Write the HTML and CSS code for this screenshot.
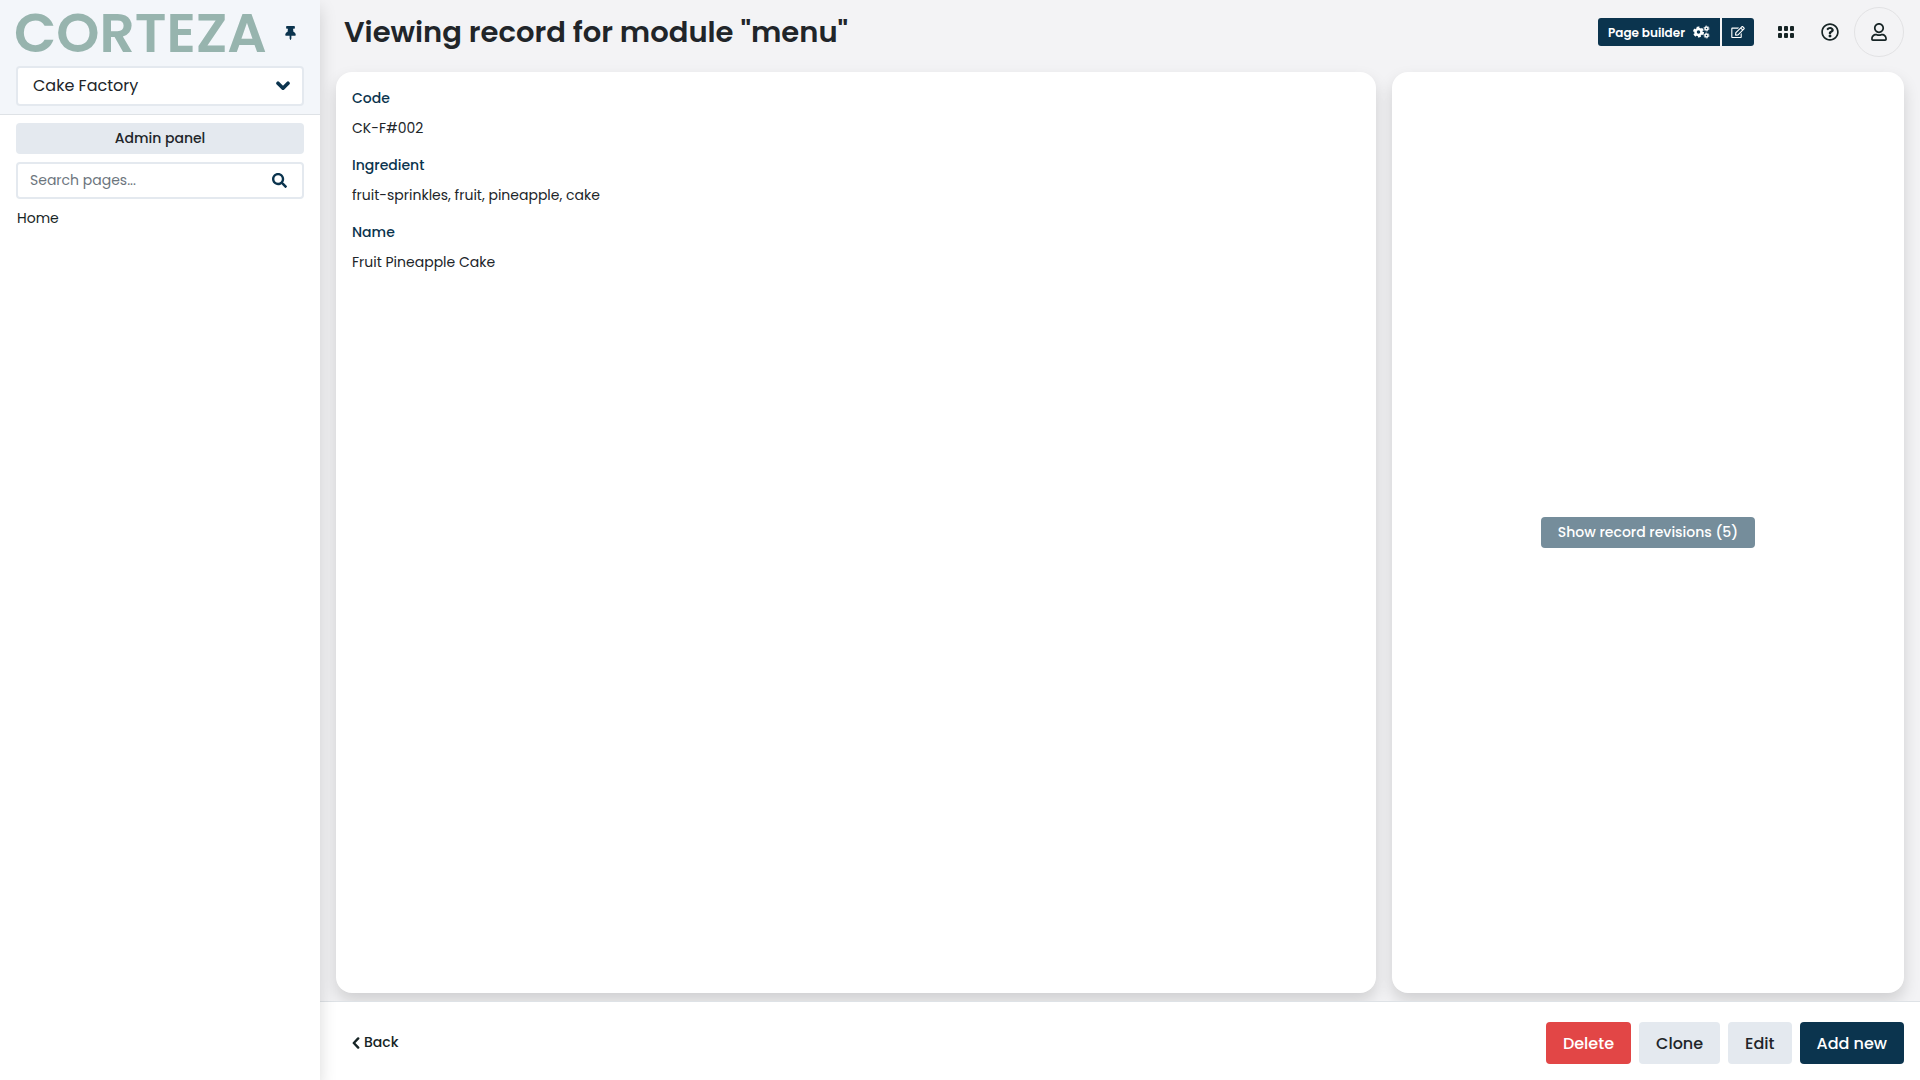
FILE: index.html
```html
<!DOCTYPE html>
<html lang="en">
<head>
<meta charset="utf-8">
<meta name="viewport" content="width=device-width, initial-scale=1">
<title>Viewing record for module "menu"</title>
<link rel="stylesheet" href="styles.css">
</head>
<body>
<div class="app">
  <aside class="sidebar">
    <header class="sidebar-head">
      <div class="brand">
        <span class="logo">CORTEZA</span>
        <button class="pin" type="button" aria-label="Pin sidebar">
          <svg width="11" height="14" viewBox="0 0 384 512" fill="currentColor"><path d="M298.028 214.267L285.793 96H328c13.255 0 24-10.745 24-24V24c0-13.255-10.745-24-24-24H56C42.745 0 32 10.745 32 24v48c0 13.255 10.745 24 24 24h42.207L85.972 214.267C37.465 236.82 0 277.261 0 328c0 13.255 10.745 24 24 24h136v104.007c0 1.242.289 2.467.845 3.578l24 48c2.941 5.882 11.364 5.893 14.311 0l24-48a8.008 8.008 0 0 0 .845-3.578V352h136c13.255 0 24-10.745 24-24-.001-51.183-37.983-91.42-85.973-113.733z"/></svg>
        </button>
      </div>
      <div class="field">
        <select class="namespace" aria-label="Namespace">
          <option>Cake Factory</option>
        </select>
        <svg class="field-icon" width="14" height="10" viewBox="0 0 14 10" fill="none" stroke="currentColor" stroke-width="3.6" stroke-linecap="round" stroke-linejoin="round"><path d="M2 2.2l5 5 5-5"/></svg>
      </div>
    </header>
    <nav class="sidebar-body">
      <button class="btn btn-light btn-small" type="button">Admin panel</button>
      <div class="field">
        <input class="search" type="search" placeholder="Search pages..." aria-label="Search pages">
        <svg class="field-icon search-icon" width="15" height="15" viewBox="0 0 512 512" fill="currentColor"><path d="M505 442.7L405.3 343c-4.5-4.5-10.6-7-17-7H372c27.6-35.3 44-79.7 44-128C416 93.1 322.9 0 208 0S0 93.1 0 208s93.1 208 208 208c48.3 0 92.7-16.4 128-44v16.3c0 6.4 2.5 12.5 7 17l99.7 99.7c9.4 9.4 24.6 9.4 33.9 0l28.3-28.3c9.4-9.4 9.4-24.6.1-34zM208 336c-70.7 0-128-57.2-128-128 0-70.7 57.2-128 128-128 70.7 0 128 57.2 128 128 0 70.7-57.2 128-128 128z"/></svg>
      </div>
      <a class="page-link" href="#">Home</a>
    </nav>
  </aside>

  <div class="content">
    <header class="topbar">
      <h1 class="title">Viewing record for module "menu"</h1>
      <div class="builder">
        <button class="builder-main" type="button">Page builder
          <svg width="17" height="14" viewBox="0 0 34 28" fill="none" stroke="currentColor">
            <circle cx="11" cy="14" r="6" stroke-width="5"/>
            <circle cx="11" cy="14" r="9" stroke-width="4" stroke-dasharray="5.4 4.02"/>
            <circle cx="27" cy="7" r="3" stroke-width="3"/>
            <circle cx="27" cy="7" r="5" stroke-width="2" stroke-dasharray="2.6 2.6"/>
            <circle cx="27" cy="21" r="3" stroke-width="3"/>
            <circle cx="27" cy="21" r="5" stroke-width="2" stroke-dasharray="2.6 2.6"/>
          </svg>
        </button>
        <button class="builder-edit" type="button" aria-label="Edit page">
          <svg width="14" height="12" viewBox="0 0 576 512" fill="currentColor"><path d="M402.3 344.9l32-32c5-5 13.7-1.5 13.7 5.7V464c0 26.5-21.5 48-48 48H48c-26.5 0-48-21.5-48-48V112c0-26.5 21.5-48 48-48h273.5c7.1 0 10.7 8.6 5.7 13.7l-32 32c-1.5 1.5-3.5 2.3-5.7 2.3H48v352h352V350.5c0-2.1.8-4.1 2.3-5.6zm156.6-201.8L296.3 405.7l-90.4 10c-26.2 2.9-48.5-19.2-45.6-45.6l10-90.4L432.9 17.1c22.9-22.9 59.9-22.9 82.7 0l43.2 43.2c22.9 22.9 22.9 60 .1 82.8zM460.1 174L402 115.9 216.2 301.8l-7.3 65.3 65.3-7.3L460.1 174zm64.8-79.7l-43.2-43.2c-4.1-4.1-10.8-4.1-14.8 0L436 82l58.1 58.1 30.9-30.9c4-4.2 4-10.8-.1-14.9z"/></svg>
        </button>
      </div>
      <div class="tools">
        <button class="tool" type="button" aria-label="Applications">
          <svg width="16" height="12" viewBox="0 0 16 12" fill="currentColor"><rect width="4" height="5" rx="1"/><rect x="6" width="4" height="5" rx="1"/><rect x="12" width="4" height="5" rx="1"/><rect y="7" width="4" height="5" rx="1"/><rect x="6" y="7" width="4" height="5" rx="1"/><rect x="12" y="7" width="4" height="5" rx="1"/></svg>
        </button>
        <button class="tool" type="button" aria-label="Help">
          <svg width="18" height="18" viewBox="0 0 512 512" fill="currentColor"><path d="M256 8C119.043 8 8 119.083 8 256c0 136.997 111.043 248 248 248s248-111.003 248-248C504 119.083 392.957 8 256 8zm0 448c-110.532 0-200-89.431-200-200 0-110.495 89.472-200 200-200 110.491 0 200 89.471 200 200 0 110.53-89.431 200-200 200zm107.244-255.2c0 67.052-72.421 68.084-72.421 92.863V300c0 6.627-5.373 12-12 12h-45.647c-6.627 0-12-5.373-12-12v-8.659c0-35.745 27.1-50.034 47.579-61.516 17.561-9.845 28.324-16.541 28.324-29.579 0-17.246-21.999-28.693-39.784-28.693-23.189 0-33.894 10.977-48.942 29.969-4.057 5.12-11.46 6.071-16.666 2.124l-27.824-21.098c-5.107-3.872-6.251-11.066-2.644-16.363C184.846 131.491 214.94 112 261.794 112c49.071 0 101.45 38.304 101.45 88.8zM298 368c0 23.159-18.841 42-42 42s-42-18.841-42-42 18.841-42 42-42 42 18.841 42 42z"/></svg>
        </button>
        <button class="tool avatar" type="button" aria-label="Profile">
          <svg width="16" height="18" viewBox="0 0 448 512" fill="currentColor"><path d="M313.6 304c-28.7 0-42.5 16-89.6 16-47.1 0-60.8-16-89.6-16C60.2 304 0 364.2 0 438.4V464c0 26.5 21.5 48 48 48h352c26.5 0 48-21.5 48-48v-25.6c0-74.2-60.2-134.4-134.4-134.4zM400 464H48v-25.6c0-47.6 38.8-86.4 86.4-86.4 14.6 0 38.3 16 89.6 16 51.7 0 74.9-16 89.6-16 47.6 0 86.4 38.8 86.4 86.4V464zM224 288c79.5 0 144-64.5 144-144S303.5 0 224 0 80 64.5 80 144s64.5 144 144 144zm0-240c52.9 0 96 43.1 96 96s-43.1 96-96 96-96-43.1-96-96 43.1-96 96-96z"/></svg>
        </button>
      </div>
    </header>

    <main class="blocks">
      <dl class="card record">
        <dt>Code</dt><dd>CK-F#002</dd>
        <dt>Ingredient</dt><dd>fruit-sprinkles, fruit, pineapple, cake</dd>
        <dt>Name</dt><dd>Fruit Pineapple Cake</dd>
      </dl>
      <section class="card revisions">
        <button class="btn btn-muted btn-small" type="button">Show record revisions (5)</button>
      </section>
    </main>

    <footer class="actions">
      <a class="back" href="#"><svg width="8" height="12" viewBox="0 0 8 12" fill="none" stroke="currentColor" stroke-width="2.4" stroke-linecap="round" stroke-linejoin="round"><path d="M6.2 1.4L1.8 6l4.4 4.6"/></svg>Back</a>
      <button class="btn btn-danger" type="button">Delete</button>
      <button class="btn btn-light" type="button">Clone</button>
      <button class="btn btn-light" type="button">Edit</button>
      <button class="btn btn-primary" type="button">Add new</button>
    </footer>
  </div>
</div>
</body>
</html>
```
FILE: styles.css
```css
*, *::before, *::after { box-sizing: border-box; }

:root {
  --primary: #0b344e;
  --text: #212529;
  --dark: #162425;
  --light: #e4e9ef;
  --canvas: #f3f3f5;
}

body {
  margin: 0;
  font-family: Poppins, Inter, sans-serif;
  font-size: 14px;
  line-height: 21px;
  color: var(--text);
}

button, input, select { font: inherit; color: inherit; }
button { margin: 0; padding: 0; border: 0; background: none; cursor: pointer; }
a { color: inherit; text-decoration: none; }
svg { display: block; flex: none; }

.app {
  display: grid;
  grid-template-columns: 320px minmax(0, 1fr);
  min-height: 100vh;
}

/* Sidebar */
.sidebar {
  position: relative;
  z-index: 1;
  background: #fff;
  box-shadow: 0 8px 16px rgba(0, 0, 0, .15);
}
.sidebar-head {
  padding: 8px 16px;
  background: #f3f6fa;
  border-bottom: 1px solid #dee2e6;
}
.brand {
  display: flex;
  align-items: center;
  justify-content: space-between;
  height: 50px;
  margin-bottom: 8px;
  padding-right: 8px;
}
.logo {
  margin-left: -2px;
  font-size: 55px;
  font-weight: 600;
  line-height: 50px;
  color: #97b4ae;
}
.pin { color: var(--primary); }

.field { display: grid; align-items: center; }
.field > * { grid-area: 1 / 1; }
.field-icon {
  justify-self: end;
  margin-right: 14px;
  color: var(--primary);
  pointer-events: none;
}
.search-icon { margin-right: 17px; }
.namespace, .search {
  width: 100%;
  border: 2px solid var(--light);
  border-radius: 4px;
  background: #fff;
  appearance: none;
}
.namespace { height: 40px; padding: 0 15px 2px; font-size: 16px; }
.search { height: 37px; padding: 0 12px; }
.search::placeholder { color: #6c757d; opacity: 1; }

.sidebar-body {
  display: flex;
  flex-direction: column;
  gap: 8px;
  padding: 8px 16px;
}
.page-link { padding: 1px; color: var(--dark); }

/* Buttons */
.btn {
  height: 42px;
  padding: 0 17px;
  border-radius: 4px;
  font-size: 16px;
  font-weight: 500;
}
.btn-small { height: 31px; font-size: 14px; }
.btn-light { background: var(--light); }
.btn-muted { background: #758d9b; color: #fff; }
.btn-danger { background: #e24646; color: #fff; }
.btn-primary { background: var(--primary); color: #fff; }

/* Main column */
.content {
  display: flex;
  flex-direction: column;
  background: var(--canvas);
}
.topbar {
  display: flex;
  align-items: center;
  height: 64px;
  padding: 0 16px 0 24px;
}
.title {
  flex: 1;
  margin: 0;
  font-size: 29px;
  font-weight: 600;
  line-height: 36px;
}
.builder {
  display: flex;
  gap: 2px;
  margin-right: 16px;
  color: #fff;
  font-size: 12px;
  font-weight: 600;
}
.builder-main, .builder-edit {
  display: flex;
  align-items: center;
  justify-content: center;
  gap: 8px;
  height: 28px;
  background: var(--primary);
}
.builder-main { padding: 0 10px; border-radius: 3px 0 0 3px; }
.builder-edit { width: 32px; border-radius: 0 3px 3px 0; }

.tools { display: flex; align-items: center; gap: 12px; color: var(--dark); }
.tool { display: grid; place-items: center; width: 32px; height: 32px; }
.avatar {
  width: 50px;
  height: 50px;
  margin-left: -4px;
  border: 1px solid #e2e2e4;
  border-radius: 50%;
}

.blocks {
  flex: 1;
  display: grid;
  grid-template-columns: 2fr 1fr;
  padding: 0 8px;
}
.card {
  margin: 8px;
  background: #fff;
  border-radius: 16px;
  box-shadow: 0 8px 16px rgba(0, 0, 0, .15);
}
.record { padding: 16px; }
.record dt { font-weight: 500; color: var(--primary); }
.record dd { margin: 9px 0 16px; }
.revisions { display: grid; place-items: center; }

.actions {
  position: relative;
  display: flex;
  align-items: center;
  gap: 8px;
  padding: 20px 16px 16px;
  background: #fff;
  border-top: 1px solid #dee2e6;
}
.back {
  display: flex;
  align-items: center;
  gap: 4px;
  margin-right: auto;
  padding: 0 0 1px 16px;
  font-weight: 500;
  color: var(--dark);
}
```
